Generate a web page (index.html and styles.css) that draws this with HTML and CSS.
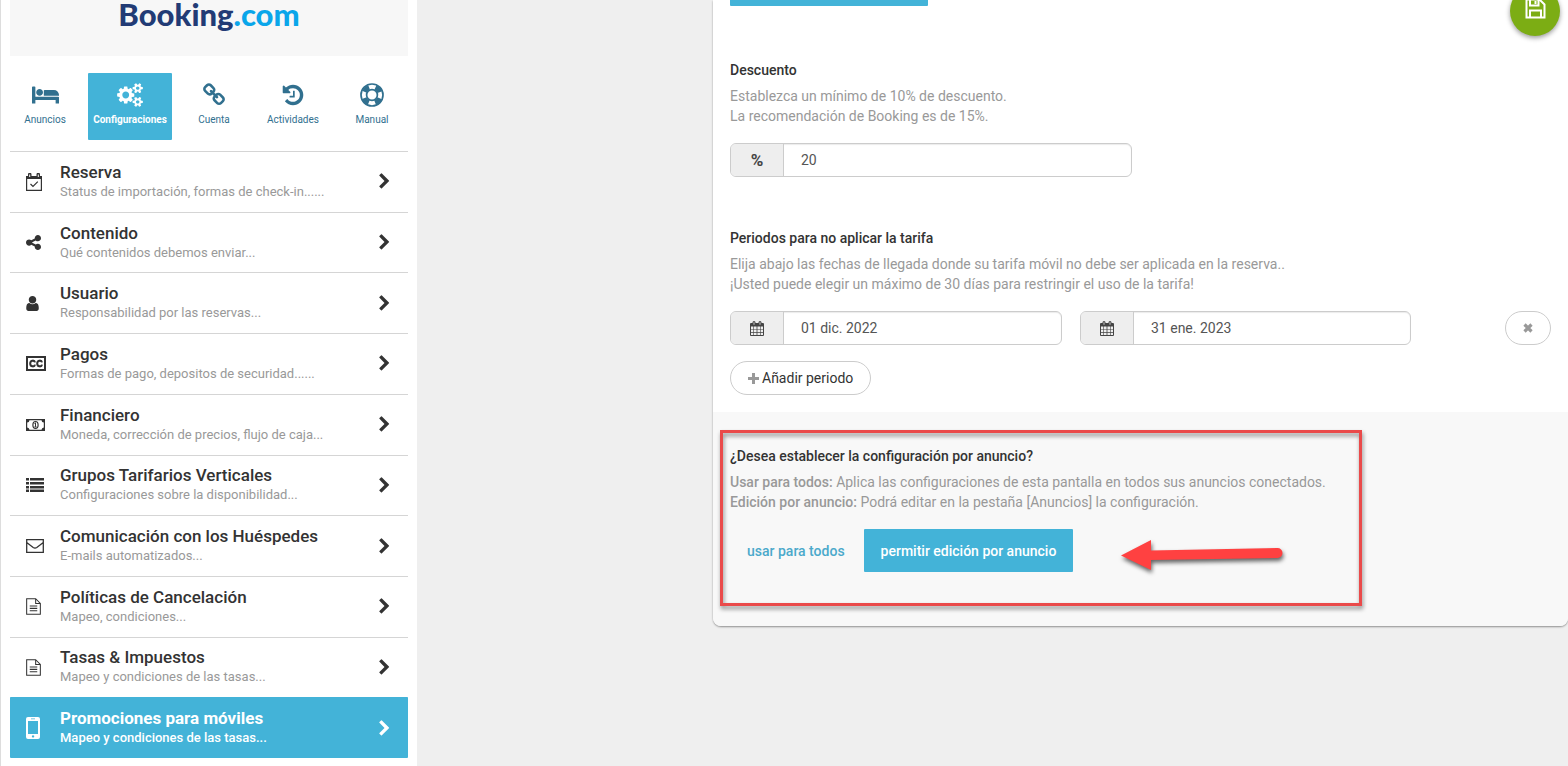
FILE: index.html
```
<!DOCTYPE html>
<html lang="es">
<head>
    <meta charset="UTF-8">
    <meta name="viewport" content="width=device-width, initial-scale=1.0">
    <title>Booking.com - Promociones para móviles</title>
    <link rel="stylesheet" href="styles.css">
</head>
<body>

    <!-- shared icons -->
    <svg class="sprite" aria-hidden="true">
        <symbol id="chevron" viewBox="0 0 1792 1792"><path d="M1363 877l-742 742q-19 19-45 19t-45-19l-166-166q-19-19-19-45t19-45l531-531-531-531q-19-19-19-45t19-45l166-166q19-19 45-19t45 19l742 742q19 19 19 45t-19 45z"/></symbol>
        <symbol id="file" viewBox="0 0 16 18"><path d="M.7.7h9.600l5 5v11.600H.7zM10.300.7v5h5M4 8.500h8M4 11h8M4 13.500h8" fill="none" stroke="currentColor" stroke-width="1.100"/></symbol>
        <symbol id="calendar" viewBox="0 0 14 15"><path fill-rule="evenodd" d="M1 2h1.500V1.500a1.500 1.500 0 0 1 3 0V2h3v-.5a1.500 1.500 0 0 1 3 0V2H13a1 1 0 0 1 1 1v11a1 1 0 0 1-1 1H1a1 1 0 0 1-1-1V3a1 1 0 0 1 1-1zM1 5.500V8h2.400V5.500zM4 5.500V8h2.600V5.500zM7.400 5.500V8H10V5.500zM10.600 5.500V8H13V5.500zM1 8.600v2.400h2.400V8.600zM4 8.600v2.400h2.600V8.600zM7.400 8.600v2.400H10V8.600zM10.600 8.600v2.400H13V8.600zM1 11.700V14h2.400v-2.300zM4 11.700V14h2.600v-2.300zM7.400 11.700V14H10v-2.300zM10.600 11.700V14H13v-2.300zM3.600 1.300v2.400h.8V1.300zM9.600 1.300v2.400h.8V1.300z"/></symbol>
    </svg>

    <div class="page">
        <aside class="sidebar">
            <div class="logo">Booking<span>.com</span></div>

            <nav class="tabs">
                <a href="#">
                    <svg width="27" height="24" viewBox="0 0 2048 1792"><path d="M256 1024h1728q26 0 45 19t19 45v448h-256v-256h-1536v256h-256v-1216q0-26 19-45t45-19h128q26 0 45 19t19 45v704zm576-320q0-106-75-181t-181-75-181 75-75 181 75 181 181 75 181-75 75-181zm1216 256v-64q0-159-112.500-271.500t-271.500-112.500h-704q-26 0-45 19t-19 45v384h1152z"/></svg>
                    Anuncios
                </a>
                <a href="#" class="active">
                    <svg width="26" height="24" viewBox="0 0 1920 1792"><path d="M896 896q0-106-75-181t-181-75-181 75-75 181 75 181 181 75 181-75 75-181zm768 512q0-52-38-90t-90-38-90 38-38 90q0 53 37.500 90.500t90.500 37.500 90.500-37.500 37.500-90.500zm0-1024q0-52-38-90t-90-38-90 38-38 90q0 53 37.500 90.500t90.500 37.500 90.500-37.500 37.500-90.500zm-384 421v185q0 10-7 19.500t-16 10.500l-155 24q-11 35-32 76 34 48 90 115 7 11 7 20 0 12-7 19-23 30-82.500 89.500t-78.500 59.500q-11 0-21-7l-115-90q-37 19-77 31-11 108-23 155-7 24-30 24h-186q-11 0-20-7.500t-10-17.500l-23-153q-34-10-75-31l-118 89q-7 7-20 7-11 0-21-8-144-133-144-160 0-9 7-19 10-14 41-53t47-61q-23-44-35-82l-152-24q-10-1-17-9.500t-7-19.500v-185q0-10 7-19.500t16-10.500l155-24q11-35 32-76-34-48-90-115-7-11-7-20 0-12 7-20 22-30 82-89t79-59q11 0 21 7l115 90q34-18 77-32 11-108 23-154 7-24 30-24h186q11 0 20 7.500t10 17.500l23 153q34 10 75 31l118-89q8-7 20-7 11 0 21 8 144 133 144 160 0 8-7 19-12 16-42 54t-45 60q23 48 34 82l152 23q10 2 17 10.500t7 19.500zm640 533v140q0 16-149 31-12 27-30 52 51 113 51 138 0 4-4 7-122 71-124 71-8 0-46-47t-52-68q-20 2-30 2t-30-2q-14 21-52 68t-46 47q-2 0-124-71-4-3-4-7 0-25 51-138-18-25-30-52-149-15-149-31v-140q0-16 149-31 13-29 30-52-51-113-51-138 0-4 4-7 4-2 35-20t59-34 30-16q8 0 46 46.500t52 67.500q20-2 30-2t30 2q51-71 92-112l6-2q4 0 124 70 4 3 4 7 0 25-51 138 17 23 30 52 149 15 149 31zm0-1024v140q0 16-149 31-12 27-30 52 51 113 51 138 0 4-4 7-122 71-124 71-8 0-46-47t-52-68q-20 2-30 2t-30-2q-14 21-52 68t-46 47q-2 0-124-71-4-3-4-7 0-25 51-138-18-25-30-52-149-15-149-31v-140q0-16 149-31 13-29 30-52-51-113-51-138 0-4 4-7 4-2 35-20t59-34 30-16q8 0 46 46.500t52 67.500q20-2 30-2t30 2q51-71 92-112l6-2q4 0 124 70 4 3 4 7 0 25-51 138 17 23 30 52 149 15 149 31z"/></svg>
                    Configuraciones
                </a>
                <a href="#">
                    <svg width="24" height="24" viewBox="0 0 1792 1792"><path d="M1520 1216q0-40-28-68l-208-208q-28-28-68-28-42 0-72 32 3 3 19 18.500t21.500 21.500 15 19 13 25.500 3.500 27.500q0 40-28 68t-68 28q-15 0-27.500-3.500t-25.500-13-19-15-21.500-21.500-18.500-19q-33 31-33 73 0 40 28 68l206 207q27 27 68 27 40 0 68-26l147-146q28-28 28-67zm-703-705q0-40-28-68l-206-207q-28-28-68-28-39 0-68 27l-147 146q-28 28-28 67 0 40 28 68l208 208q27 27 68 27 42 0 72-31-3-3-19-18.500t-21.500-21.500-15-19-13-25.500-3.500-27.500q0-40 28-68t68-28q15 0 27.500 3.500t25.500 13 19 15 21.500 21.500 18.500 19q33-31 33-73zm895 705q0 120-85 203l-147 146q-83 83-203 83-121 0-204-85l-206-207q-83-83-83-203 0-123 88-209l-88-88q-86 88-208 88-120 0-204-84l-208-208q-84-84-84-204t85-203l147-146q83-83 203-83 121 0 204 85l206 207q83 83 83 203 0 123-88 209l88 88q86-88 208-88 120 0 204 84l208 208q84 84 84 204z"/></svg>
                    Cuenta
                </a>
                <a href="#">
                    <svg width="24" height="24" viewBox="0 0 1792 1792"><path d="M1664 896q0 156-61 298t-164 245-245 164-298 61q-172 0-327-72.500t-264-204.500q-7-10-6.500-22.500t8.500-20.500l137-138q10-9 25-9 16 2 23 12 73 95 179 147t225 52q104 0 198.500-40.500t163.500-109.500 109.500-163.500 40.500-198.500-40.500-198.500-109.500-163.500-163.500-109.500-198.500-40.500q-98 0-188 35.500t-160 101.500l137 138q31 30 14 69-17 40-59 40h-448q-26 0-45-19t-19-45v-448q0-42 40-59 39-17 69 14l130 129q107-101 244.500-156.500t284.500-55.500q156 0 298 61t245 164 164 245 61 298zm-640-288v448q0 14-9 23t-23 9h-320q-14 0-23-9t-9-23v-64q0-14 9-23t23-9h224v-352q0-14 9-23t23-9h64q14 0 23 9t9 23z"/></svg>
                    Actividades
                </a>
                <a href="#">
                    <svg width="24" height="24" viewBox="0 0 24 24" fill="none" stroke="currentColor"><circle cx="12" cy="12" r="11" stroke-width="1.700"/><circle cx="12" cy="12" r="5.400" stroke-width="1.700"/><circle cx="12" cy="12" r="8.300" stroke-width="5" stroke-dasharray="6.500 6.538" stroke-dashoffset="-3.269"/></svg>
                    Manual
                </a>
            </nav>

            <nav class="menu">
                <a href="#">
                    <svg class="icon" width="16" height="18" viewBox="0 0 16 18"><path d="M.6 4h14.800v13.300H.6z" fill="none" stroke="currentColor" stroke-width="1.200"/><path d="M0 3h2V1.500a1.500 1.500 0 0 1 3.500 0V3h5V1.500a1.500 1.500 0 0 1 3.500 0V3h2v3H0z"/><path d="M3.700 1.500v2.500M12.300 1.500v2.500" stroke="#fff"/><path d="M4.500 11l2.500 2.500 4.800-4.800" fill="none" stroke="currentColor" stroke-width="1.200"/></svg>
                    <span class="text"><strong>Reserva</strong><small>Status de importación, formas de check-in......</small></span>
                    <svg class="arrow"><use href="#chevron"/></svg>
                </a>
                <a href="#">
                    <svg class="icon" width="15" height="15" viewBox="128 128 1536 1536"><path d="M1344 1024q133 0 226.500 93.500t93.500 226.500-93.500 226.500-226.500 93.500-226.500-93.500-93.500-226.500q0-12 2-34l-360-180q-92 86-218 86-133 0-226.500-93.500t-93.500-226.500 93.500-226.500 226.500-93.500q126 0 218 86l360-180q-2-22-2-34 0-133 93.500-226.500t226.500-93.500 226.500 93.500 93.500 226.500-93.500 226.500-226.500 93.500q-126 0-218-86l-360 180q2 22 2 34t-2 34l360 180q92-86 218-86z"/></svg>
                    <span class="text"><strong>Contenido</strong><small>Qué contenidos debemos enviar...</small></span>
                    <svg class="arrow"><use href="#chevron"/></svg>
                </a>
                <a href="#">
                    <svg class="icon" width="13" height="15" viewBox="256 128 1280 1536"><path d="M1536 1399q0 109-62.500 187t-150.500 78h-854q-88 0-150.500-78t-62.500-187q0-85 8.500-160.500t31.500-152 58.500-131 94-89 134.500-34.500q131 128 313 128t313-128q76 0 134.500 34.500t94 89 58.500 131 31.500 152 8.500 160.500zm-256-887q0 159-112.500 271.500t-271.500 112.500-271.500-112.500-112.500-271.500 112.500-271.500 271.500-112.500 271.500 112.500 112.500 271.500z"/></svg>
                    <span class="text"><strong>Usuario</strong><small>Responsabilidad por las reservas...</small></span>
                    <svg class="arrow"><use href="#chevron"/></svg>
                </a>
                <a href="#">
                    <svg class="icon" width="20" height="15" viewBox="0 0 20 15" fill="none" stroke="currentColor"><path d="M1 1h18v13H1z" stroke-width="2"/><path d="M9 6.300C8.600 4 4.200 3.800 4.200 7.500s4.400 3.500 4.800 1.200M16 6.300c-.4-2.300-4.800-2.500-4.800 1.200s4.400 3.500 4.800 1.200" stroke-width="2"/></svg>
                    <span class="text"><strong>Pagos</strong><small>Formas de pago, depositos de securidad......</small></span>
                    <svg class="arrow"><use href="#chevron"/></svg>
                </a>
                <a href="#">
                    <svg class="icon" width="19" height="12" viewBox="0 0 19 12"><path fill-rule="evenodd" d="M0 0h19v12H0zM3.500 1.200A2.500 2.500 0 0 1 1.200 3.500v5a2.500 2.500 0 0 1 2.300 2.300h12a2.500 2.500 0 0 1 2.300-2.300v-5a2.500 2.500 0 0 1-2.300-2.300z"/><ellipse cx="9.500" cy="6" rx="2.600" ry="3.500" fill="none" stroke="currentColor" stroke-width="1.200"/><path d="M8.500 4.500l1-.7v4M8.300 8h2.400" fill="none" stroke="currentColor"/></svg>
                    <span class="text"><strong>Financiero</strong><small>Moneda, corrección de precios, flujo de caja...</small></span>
                    <svg class="arrow"><use href="#chevron"/></svg>
                </a>
                <a href="#">
                    <svg class="icon" width="18" height="14" viewBox="0 0 18 14"><path d="M0 0h3v2.500H0zM4 0h14v2.500H4zM0 4h3v2.500H0zM4 4h14v2.500H4zM0 8h3v2.500H0zM4 8h14v2.500H4zM0 11.500h3V14H0zM4 11.500h14V14H4z"/></svg>
                    <span class="text"><strong>Grupos Tarifarios Verticales</strong><small>Configuraciones sobre la disponibilidad...</small></span>
                    <svg class="arrow"><use href="#chevron"/></svg>
                </a>
                <a href="#">
                    <svg class="icon" width="18" height="14" viewBox="0 0 18 14"><path d="M.7.7h16.600v12.600H.7zM.7 3.500l6.500 5q1.800 1.200 3.600 0l6.500-5" fill="none" stroke="currentColor" stroke-width="1.300"/></svg>
                    <span class="text"><strong>Comunicación con los Huéspedes</strong><small>E-mails automatizados...</small></span>
                    <svg class="arrow"><use href="#chevron"/></svg>
                </a>
                <a href="#">
                    <svg class="icon" width="15" height="17"><use href="#file"/></svg>
                    <span class="text"><strong>Políticas de Cancelación</strong><small>Mapeo, condiciones...</small></span>
                    <svg class="arrow"><use href="#chevron"/></svg>
                </a>
                <a href="#">
                    <svg class="icon" width="15" height="17"><use href="#file"/></svg>
                    <span class="text"><strong>Tasas &amp; Impuestos</strong><small>Mapeo y condiciones de las tasas...</small></span>
                    <svg class="arrow"><use href="#chevron"/></svg>
                </a>
                <a href="#" class="active">
                    <svg class="icon" width="14" height="22" viewBox="0 0 14 22"><path fill-rule="evenodd" d="M2 0h10a2 2 0 0 1 2 2v18a2 2 0 0 1-2 2H2a2 2 0 0 1-2-2V2a2 2 0 0 1 2-2zM2 4v13h10V4zM5 1.500v.8h4v-.8zM7 18.200a1.200 1.200 0 1 0 .1 0z"/></svg>
                    <span class="text"><strong>Promociones para móviles</strong><small>Mapeo y condiciones de las tasas...</small></span>
                    <svg class="arrow"><use href="#chevron"/></svg>
                </a>
            </nav>
        </aside>

        <main class="panel">
            <form>
                <div class="panel-body">
                    <button type="button" class="top-button" aria-label="Tarifa"></button>

                    <section class="field">
                        <label for="descuento">Descuento</label>
                        <p>Establezca un mínimo de 10% de descuento.<br>La recomendación de Booking es de 15%.</p>
                        <div class="input-group discount">
                            <span class="addon">%</span>
                            <input type="text" id="descuento" value="20">
                        </div>
                    </section>

                    <section class="field periods">
                        <label for="desde">Periodos para no aplicar la tarifa</label>
                        <p>Elija abajo las fechas de llegada donde su tarifa móvil no debe ser aplicada en la reserva..<br>¡Usted puede elegir un máximo de 30 días para restringir el uso de la tarifa!</p>
                        <div class="period-row">
                            <div class="input-group">
                                <span class="addon"><svg width="14" height="15"><use href="#calendar"/></svg></span>
                                <input type="text" id="desde" value="01 dic. 2022">
                            </div>
                            <div class="input-group">
                                <span class="addon"><svg width="14" height="15"><use href="#calendar"/></svg></span>
                                <input type="text" aria-label="Hasta" value="31 ene. 2023">
                            </div>
                            <button type="button" class="pill remove" aria-label="Eliminar periodo">
                                <svg width="10" height="10" viewBox="0 0 10 10"><path d="M1.500 1.500l7 7M8.500 1.500l-7 7" stroke="currentColor" stroke-width="3.200"/></svg>
                            </button>
                        </div>
                        <button type="button" class="pill">
                            <svg width="11" height="11" viewBox="0 0 11 11"><path d="M5.500 0v11M0 5.500h11" stroke="currentColor" stroke-width="3"/></svg>
                            Añadir periodo
                        </button>
                    </section>
                </div>

                <div class="panel-footer">
                    <h2>¿Desea establecer la configuración por anuncio?</h2>
                    <p><b>Usar para todos:</b> Aplica las configuraciones de esta pantalla en todos sus anuncios conectados.<br><b>Edición por anuncio:</b> Podrá editar en la pestaña [Anuncios] la configuración.</p>
                    <div class="choices">
                        <button type="button">usar para todos</button>
                        <button type="button" class="active">permitir edición por anuncio</button>
                    </div>

                    <!-- highlight over the footer -->
                    <div class="highlight"></div>
                    <svg class="pointer" width="162" height="34" viewBox="0 0 162 34"><path d="M0 17.500L30 2v10.500L156.500 10a5 5 0 0 1 0 10L30 22v10z"/></svg>
                </div>

                <button type="submit" class="save" aria-label="Guardar">
                    <svg width="21" height="21" viewBox="0 0 21 21" fill="none" stroke="currentColor" stroke-width="2"><path d="M1.500 1.500h13l5 5v13h-18zM5 1.500v6h8.500v-6M5 19.500v-7h11v7"/><path d="M10.500 3v3"/></svg>
                </button>
            </form>
        </main>
    </div>

</body>
</html>
```
FILE: styles.css
```
* {
    box-sizing: border-box;
}
body {
    font-family: Roboto, Arial, sans-serif;
    font-size: 14px;
    line-height: 20px;
    color: #333;
    background-color: #efefef;
    margin: 0;
}
a {
    color: inherit;
    text-decoration: none;
}
svg {
    fill: currentColor;
    flex: none;
}
svg[fill="none"] {
    fill: none;
}
button,
input {
    font: inherit;
    color: inherit;
}
button {
    border: none;
    background: none;
    cursor: pointer;
}
b {
    font-weight: 500;
}
.sprite {
    display: none;
}
.page {
    display: flex;
    min-height: 100vh;
}

/* sidebar */
.sidebar {
    display: flex;
    flex-direction: column;
    width: 417px;
    padding: 0 9px 8px;
    background: white;
    border-left: 1px solid #ddd;
}
.logo {
    height: 56px;
    background: #f7f7f7;
    color: #223b75;
    font-family: Lato, sans-serif;
    font-size: 31px;
    font-weight: 900;
    line-height: 28px;
    text-align: center;
}
.logo span {
    color: #0aa6ea;
}
.tabs {
    display: grid;
    grid-template-columns: 70fr 100fr 68fr 90fr 68fr;
    justify-items: center;
    padding: 17px 2px 11px 0;
}
.tabs a {
    display: flex;
    flex-direction: column;
    align-items: center;
    gap: 3px;
    height: 67px;
    padding: 10px 5px;
    border-radius: 1px;
    color: #31708f;
    font-size: 10px;
}
.tabs .active {
    background: #43b3d8;
    color: white;
    font-weight: bold;
}
.menu {
    display: grid;
    grid-auto-rows: 1fr;
    flex: 1;
}
.menu a {
    display: grid;
    grid-template-columns: 34px 1fr 17px;
    align-items: center;
    padding: 0 15px 0 16px;
    border-top: 1px solid #d5d5d5;
}
.menu strong,
.menu small {
    display: block;
}
.menu strong {
    font-size: 17px;
    font-weight: 500;
}
.menu small {
    color: #999;
    font-size: 13px;
}
.menu .arrow {
    width: 17px;
    height: 17px;
}
.menu .active {
    border-color: #43b3d8;
    border-radius: 1px;
    background: #43b3d8;
    color: white;
}
.menu .active strong {
    font-weight: bold;
}
.menu .active small {
    color: white;
    font-weight: 500;
}

/* settings panel */
.panel {
    position: relative;
    flex: 1;
    align-self: flex-start;
    margin-left: 296px;
    border-radius: 0 0 8px 8px;
    background: white;
    box-shadow: 0 1px 2px rgba(0, 0, 0, 0.4);
}
.panel-body {
    padding: 0 17px 17px;
}
.top-button {
    display: block;
    width: 198px;
    height: 6px;
    padding: 0;
    border-radius: 0 0 1px 1px;
    background: #43b3d8;
}
.field {
    padding-top: 54px;
}
.periods {
    padding-top: 51px;
}
label,
h2 {
    display: block;
    margin: 0;
    font-size: 14px;
    font-weight: 500;
}
.panel p {
    margin: 6px 0 17px;
    color: #999;
}
.input-group {
    display: flex;
    height: 34px;
    border: 1px solid #ccc;
    border-radius: 6px;
    background: white;
    box-shadow: inset 0 1px 1px rgba(0, 0, 0, 0.08);
    overflow: hidden;
}
.discount {
    width: 49%;
}
.addon {
    display: flex;
    align-items: center;
    justify-content: center;
    width: 53px;
    border-right: 1px solid #ccc;
    background: #eee;
    color: #444;
    font-size: 17px;
    font-weight: bold;
}
.input-group input {
    flex: 1;
    min-width: 0;
    padding: 0 17px;
    border: none;
    background: none;
    color: #555;
}
.period-row {
    display: grid;
    grid-template-columns: 332fr 331fr 122fr;
    gap: 18px;
    margin-bottom: 16px;
}
.pill {
    display: flex;
    align-items: center;
    gap: 3px;
    height: 34px;
    padding: 0 17px;
    border: 1px solid #ccc;
    border-radius: 17px;
    background: white;
}
.pill svg {
    color: #999;
}
.remove {
    justify-self: end;
}
.panel-footer {
    position: relative;
    padding: 34px 17px 54px;
    border-radius: 0 0 8px 8px;
    background: #f8f8f8;
}
.choices {
    display: flex;
    gap: 2px;
}
.choices button {
    height: 43px;
    padding: 0 17px;
    border-radius: 1px;
    color: #4ba9cb;
    font-weight: 500;
}
.choices .active {
    background: #43b3d8;
    color: white;
}
.highlight {
    position: absolute;
    top: 18px;
    left: 7px;
    width: 642px;
    height: 176px;
    border: 3px solid #ea4a4a;
    filter: drop-shadow(1px 3px 2px rgba(0, 0, 0, 0.45));
    pointer-events: none;
}
.pointer {
    position: absolute;
    top: 126px;
    left: 408px;
    color: #ff4141;
    overflow: visible;
    filter: drop-shadow(1px 3px 2px rgba(0, 0, 0, 0.6));
}
.save {
    position: absolute;
    top: -14px;
    right: 8px;
    display: flex;
    align-items: center;
    justify-content: center;
    width: 50px;
    height: 50px;
    padding: 0 0 6px;
    border-radius: 50%;
    background: #7cad14;
    color: white;
    box-shadow: 0 2px 5px rgba(0, 0, 0, 0.4);
}
```
